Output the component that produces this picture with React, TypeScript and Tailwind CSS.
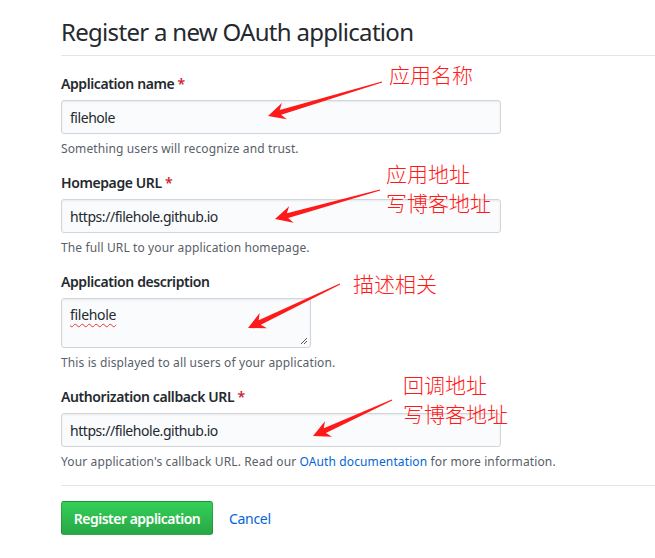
import React from "react";

const font = { fontFamily: '"Noto Sans", "Liberation Sans", Arial, sans-serif' };
const cjk = { fontFamily: '"Noto Sans CJK SC", sans-serif' };

function Arrow({ x1, y1, x2, y2 }: { x1: number; y1: number; x2: number; y2: number }) {
  const dx = x2 - x1;
  const dy = y2 - y1;
  const len = Math.sqrt(dx * dx + dy * dy);
  const ux = dx / len;
  const uy = dy / len;
  const px = -uy;
  const py = ux;
  const headLen = 17;
  const headW = 8.5;
  const bx = x2 - ux * headLen;
  const by = y2 - uy * headLen;
  const nx = x2 - ux * (headLen - 4);
  const ny = y2 - uy * (headLen - 4);
  const pts = [
    [x1 + px * 0.5, y1 + py * 0.5],
    [nx + px * 2.5, ny + py * 2.5],
    [bx + px * headW, by + py * headW],
    [x2, y2],
    [bx - px * headW, by - py * headW],
    [nx - px * 2.5, ny - py * 2.5],
    [x1 - px * 0.5, y1 - py * 0.5],
  ];
  return <polygon points={pts.map((p) => p.join(",")).join(" ")} fill="#ff1a1a" />;
}

function Label({ children, required }: { children: React.ReactNode; required?: boolean }) {
  return (
    <div className="text-[14px] font-semibold leading-[20px] tracking-[-0.4px] text-[#24292e]">
      {children}
      {required && <span className="text-[#cb2431]"> *</span>}
    </div>
  );
}

function Note({ children }: { children: React.ReactNode }) {
  return <div className="mt-[6px] text-[12px] leading-[18px] tracking-[0.12px] text-[#586069]">{children}</div>;
}

function Input({ value }: { value: string }) {
  return (
    <div className="mt-[6px] flex h-[34px] w-[440px] items-center rounded-[3px] border border-[#d1d5da] bg-[#fafbfc] px-[8px] text-[14px] tracking-[-0.45px] text-[#24292e] shadow-[inset_0_1px_2px_rgba(27,31,35,0.075)]">
      {value}
    </div>
  );
}

export default function App() {
  return (
    <div className="relative h-[558px] w-[655px] overflow-hidden bg-white" style={font}>
      <div className="pl-[61px]">
        <div className="border-b border-[#e1e4e8] pb-[8px] pt-[16px]">
          <h1 className="text-[24px] font-normal leading-[31px] tracking-[-0.7px] text-[#24292e]">
            Register a new OAuth application
          </h1>
        </div>

        <div className="pt-[18px]">
          <Label required>Application name</Label>
          <Input value="filehole" />
          <Note>Something users will recognize and trust.</Note>
        </div>

        <div className="pt-[15px]">
          <Label required>Homepage URL</Label>
          <Input value="https://filehole.github.io" />
          <Note>The full URL to your application homepage.</Note>
        </div>

        <div className="pt-[15px]">
          <Label>Application description</Label>
          <div className="relative mt-[6px] h-[50px] w-[250px] rounded-[3px] border border-[#d1d5da] bg-[#fafbfc] px-[8px] pt-[6px] text-[14px] leading-[20px] tracking-[-0.3px] text-[#24292e] shadow-[inset_0_1px_2px_rgba(27,31,35,0.075)]">
            <span className="underline decoration-[#e53935] decoration-wavy decoration-1 underline-offset-[3px]">filehole</span>
            <svg className="absolute bottom-[2px] right-[2px]" width="8" height="8" viewBox="0 0 8 8">
              <line x1="1" y1="7" x2="7" y2="1" stroke="#555" strokeWidth="1" />
              <line x1="4" y1="7" x2="7" y2="4" stroke="#555" strokeWidth="1" />
            </svg>
          </div>
          <Note>This is displayed to all users of your application.</Note>
        </div>

        <div className="pt-[15px]">
          <Label required>Authorization callback URL</Label>
          <Input value="https://filehole.github.io" />
          <Note>
            Your application's callback URL. Read our <span className="text-[#0366d6]">OAuth documentation</span> for
            more information.
          </Note>
        </div>

        <div className="mt-[14px] border-t border-[#e1e4e8] pt-[15px]">
          <div className="flex items-center gap-[16px]">
            <div className="flex h-[34px] w-[152px] items-center justify-center rounded-[3px] border border-[rgba(27,31,35,0.2)] bg-gradient-to-b from-[#34d058] to-[#28a745] text-[14px] font-semibold tracking-[-0.5px] text-white">
              Register application
            </div>
            <span className="text-[14px] tracking-[-0.3px] text-[#0366d6]">Cancel</span>
          </div>
        </div>
      </div>

      <svg className="pointer-events-none absolute left-0 top-0" width="655" height="558">
        <Arrow x1={382} y1={82} x2={268} y2={116} />
        <Arrow x1={380} y1={190} x2={275} y2={219} />
        <Arrow x1={340} y1={284} x2={248} y2={328} />
        <Arrow x1={392} y1={400} x2={313} y2={436} />
      </svg>

      <div className="absolute left-[389px] top-[60px] text-[21px] font-light leading-[29px] text-[#ff1a1a]" style={cjk}>
        应用名称
      </div>
      <div className="absolute left-[386px] top-[159px] text-[21px] font-light leading-[29px] text-[#ff1a1a]" style={cjk}>
        <div>应用地址</div>
        <div>写博客地址</div>
      </div>
      <div className="absolute left-[353px] top-[269px] text-[21px] font-light leading-[29px] text-[#ff1a1a]" style={cjk}>
        描述相关
      </div>
      <div className="absolute left-[403px] top-[370px] text-[21px] font-light leading-[29px] text-[#ff1a1a]" style={cjk}>
        <div>回调地址</div>
        <div>写博客地址</div>
      </div>
    </div>
  );
}
